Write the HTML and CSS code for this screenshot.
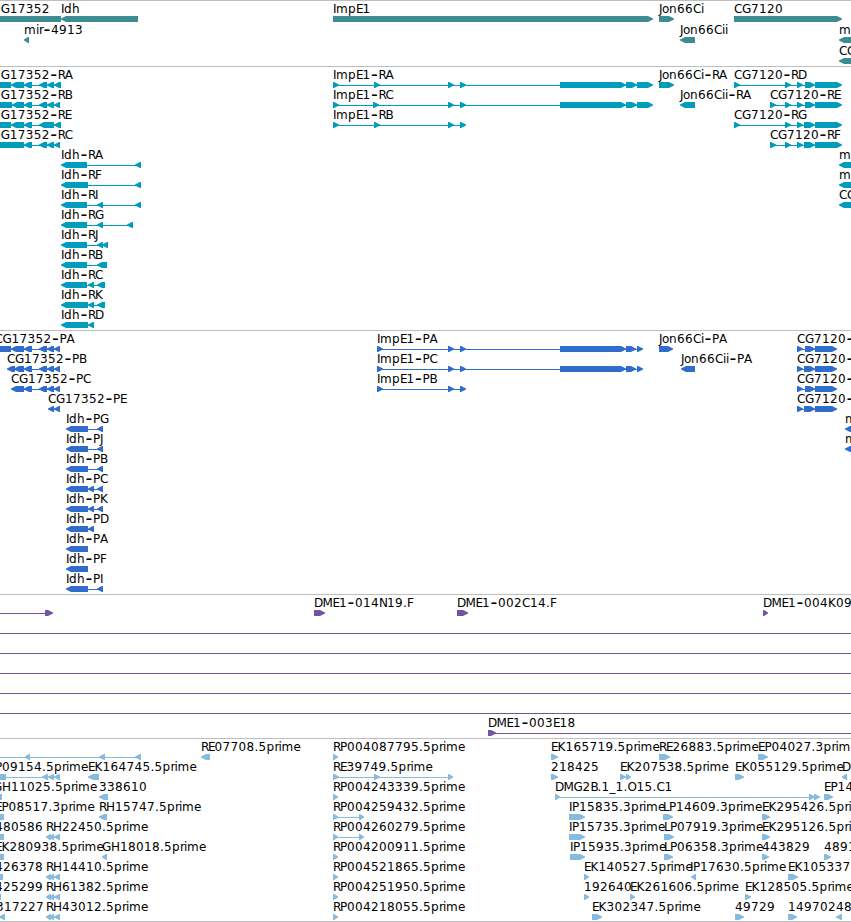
FILE: index.html
```html
<!DOCTYPE html>
<html lang="en">
<head>
<meta charset="utf-8">
<title>Genome browser</title>
<link rel="stylesheet" href="styles.css">
</head>
<body>
<main class="browser" id="browser"></main>
<script src="tracks.js"></script>
</body>
</html>
```
FILE: styles.css
```css
body {
  margin: 0;
  background: #fff;
  overflow: hidden;
}

.browser {
  display: flex;
  flex-direction: column;
  width: 851px;
  height: 922px;
  box-sizing: border-box;
  overflow: hidden;
  border-bottom: 1px solid #bebebe;
}

.track {
  display: flex;
  flex-direction: column;
  flex: none;
  box-sizing: border-box;
  border-top: 1px solid #bebebe;
}

.genes { height: 66px; color: #3c8c92; }
.transcripts { height: 264px; color: #009cbc; }
.proteins { height: 264px; color: #306ccc; }
.clones { height: 144px; color: #7453a4; }
.ests { height: 183px; color: #86bbdd; }

.row {
  display: block;
  flex: none;
  width: 851px;
  height: 20px;
  overflow: visible;
}

.genes .row { height: 21px; }

.label {
  font-family: "DejaVu Sans", sans-serif;
  font-size: 12px;
  fill: #000;
}

.hyphen { font-size: 19px; }

.exon { fill: currentColor; }

.intron {
  fill: currentColor;
  shape-rendering: crispEdges;
}
```
FILE: tracks.js
```js
// Each feature: [label, label x, direction, exons, line start, line end]
const R = '>', L = '<';
const tail = [[39, 47], [47, 54], [54, 60]];
const imp = [[333, 339], [374, 380], [448, 454], [460, 466]];
const impEnd = [[560, 626], [626, 637], [637, 653]];
const impP = [[377, 383], [448, 454], [460, 466]];
const impPEnd = [[560, 626], [626, 636], [637, 643]];
const cg = (a, b) => [[a, a + 6], [785, 791], [797, 803], [b, 815], [815, 842]];
const cgP = b => ['CG7120-P', 797, R, [[797, 803], [b, 815], [815, 837]]];
const rh = [[46, 51], [50, 54], [54, 60]];
const wide = ['', 0, R, [], -2, 853];
const rp = (name, exons) => [name + '.5prime', 333, R, exons || [[333, 338]]];

const tracks = [
  ['genes', [
    [['G17352', 0.7, R, [[-20, 67]], 0, 0, 61], ['Idh', 61, L, [[61, 138]]], ['ImpE1', 333, R, [[333, 653]]],
      ['Jon66Ci', 659, R, [[659, 674]]], ['CG7120', 734, R, [[734, 842]]]],
    [['mir-4913', 24, L, [[24, 29]]], ['Jon66Cii', 680, L, [[680, 695]]], ['mir', 839, L, [[839, 860]]]],
    [['CG', 839, L, [[839, 860]]]]
  ]],
  ['transcripts', [
    [['G17352-RA', 0.7, L, [[-9, 11], [11, 24], [24, 32], [39, 47], [47, 54], [54, 61]]],
      ['ImpE1-RA', 333, R, [...imp, ...impEnd]], ['Jon66Ci-RA', 659, R, [[659, 674]]], ['CG7120-RD', 734, R, cg(734, 805)]],
    [['G17352-RB', 0.7, L, [[-9, 12], [12, 24], [24, 32], ...tail]],
      ['ImpE1-RC', 333, R, [[333, 339], [373, 379], ...imp.slice(2), ...impEnd]],
      ['Jon66Cii-RA', 680, L, [[680, 695]]], ['CG7120-RE', 770, R, cg(770, 805)]],
    [['G17352-RE', 0.7, L, [[-9, 11], [11, 24], [24, 32], [39, 54], [54, 61]]],
      ['ImpE1-RB', 333, R, imp], ['CG7120-RG', 734, R, cg(734, 804)]],
    [['G17352-RC', 0.7, L, [[-9, 24], [24, 32], ...tail]], ['CG7120-RF', 770, R, cg(770, 804)]],
    [['Idh-RA', 61, L, [[61, 87], [135, 141]]], ['mir', 839, L, [[839, 860]]]],
    [['Idh-RF', 61, L, [[61, 88], [135, 141]]], ['mir', 839, L, [[839, 860]]]],
    [['Idh-RI', 61, L, [[61, 87], [97, 103], [135, 141]]], ['CG', 839, L, [[839, 860]]]],
    [['Idh-RG', 61, L, [[61, 87], [97, 103], [127, 133]]]],
    [['Idh-RJ', 61, L, [[61, 87], [97, 103], [102, 108]]]],
    [['Idh-RB', 61, L, [[61, 87], [97, 107]]]],
    [['Idh-RC', 61, L, [[61, 87], [88, 94], [97, 105]]]],
    [['Idh-RK', 61, L, [[61, 88], [88, 94], [97, 105]]]],
    [['Idh-RD', 61, L, [[61, 88], [88, 94]]]]
  ]],
  ['proteins', [
    [['CG17352-PA', -5.5, L, [[-9, 11], [11, 24], [24, 32], ...tail]], ['ImpE1-PA', 377, R, [...impP, ...impPEnd]],
      ['Jon66Ci-PA', 659, R, [[659, 673]]], cgP(805)],
    [['CG17352-PB', 7, L, [[7, 15], [14, 24], [24, 32], ...tail]], ['ImpE1-PC', 377, R, [...impP, ...impPEnd]],
      ['Jon66Cii-PA', 681, L, [[681, 695]]], cgP(804)],
    [['CG17352-PC', 11, L, [[11, 24], [24, 32], ...tail]], ['ImpE1-PB', 377, R, impP], cgP(805)],
    [['CG17352-PE', 48, L, [[48, 54], [54, 60]]], cgP(804)],
    [['Idh-PG', 66, L, [[66, 88], [97, 103]]], ['m', 845, L, [[845, 860]]]],
    [['Idh-PJ', 66, L, [[66, 88], [97, 103]]], ['m', 845, L, [[845, 860]]]],
    [['Idh-PB', 66, L, [[66, 88], [97, 103]]]],
    [['Idh-PC', 66, L, [[66, 88], [88, 94], [97, 103]]]],
    [['Idh-PK', 66, L, [[66, 88], [88, 94], [97, 103]]]],
    [['Idh-PD', 66, L, [[66, 88], [88, 94]]]],
    [['Idh-PA', 66, L, [[66, 88]]]],
    [['Idh-PF', 66, L, [[66, 88]]]],
    [['Idh-PI', 66, L, [[66, 88], [97, 103]]]]
  ]],
  ['clones', [
    [['', 0, R, [[45, 53]], -2, 46], ['DME1-014N19.F', 314, R, [[314, 325]]],
      ['DME1-002C14.F', 457, R, [[457, 468]]], ['DME1-004K09', 763, R, [[763, 768]]]],
    [wide], [wide], [wide], [wide], [wide],
    [['DME1-003E18', 488, R, [[488, 496]], 488, 853]]
  ]],
  ['ests', [
    [['', 0, L, [[25, 30], [99, 105], [135, 141]], -2, 141], ['RE07708.5prime', 201, L, [[201, 210]]], rp('RP004087795'),
      ['EK165719.5prime', 551, R, [[551, 558]]], ['RE26883.5prime', 659, R, [[659, 670]]], ['EP04027.3prime', 758, R, [[758, 768]]]],
    [['P09154.5prime', -5, L, [[-9, 6], [42, 48], [48, 54], [54, 60]]], ['EK164745.5prime', 88, L, [[88, 99]]],
      ['RE39749.5prime', 333, R, [[333, 339], [374, 380], [448, 453]]], ['218425', 551, R, [[551, 558]]],
      ['EK207538.5prime', 620, R, [[620, 626], [626, 631]]], ['EK055129.5prime', 735, R, [[735, 744]]], ['D', 842, L, [[842, 847]]]],
    [['GH11025.5prime', -7, L, [[-9, 2]]], ['338610', 99, L, [[99, 108]]], rp('RP004243339'),
      ['DMG2B.1_1.O15.C1', 555, R, [[555, 560], [809, 815], [814, 820]]], ['EP14', 824, R, [[824, 833]]]],
    [['EP08517.3prime', -5, L, [[-9, 4]]], ['RH15747.5prime', 99, L, [[99, 107]]], rp('RP004259432', [[333, 338], [359, 364]]),
      ['IP15835.3prime', 569, R, [[569, 585]]], ['LP14609.3prime', 663, R, [[663, 673]]], ['EK295426.5prime', 762, R, [[762, 770]]]],
    [['480586', -5, L, [[-9, 4]]], ['RH22450.5prime', 46, L, rh], rp('RP004260279', [[333, 338], [359, 364]]),
      ['IP15735.3prime', 569, R, [[569, 585]]], ['LP07919.3prime', 664, R, [[664, 674]]], ['EK295126.5prime', 762, R, [[762, 770]]]],
    [['EK280938.5prime', -5, L, [[-9, 4]]], ['GH18018.5prime', 102, L, [[102, 107]]], rp('RP004200911'),
      ['IP15935.3prime', 570, R, [[570, 585]]], ['LP06358.3prime', 664, R, [[664, 673]]], ['443829', 762, R, [[762, 769]]],
      ['48911', 824, R, [[824, 831]]]],
    [['426378', -5, L, [[-9, 3]]], ['RH14410.5prime', 46, L, rh], rp('RP004521865'),
      ['EK140527.5prime', 584, R, [[584, 589]]], ['IP17630.5prime', 690, L, [[691, 696]]], ['EK105337', 788, R, [[788, 798]]]],
    [['425299', -5, L, [[-9, 1]]], ['RH61382.5prime', 46, L, rh], rp('RP004251950'),
      ['192640', 584, R, [[584, 589]]], ['EK261606.5prime', 630, R, [[630, 635]]], ['EK128505.5prime', 745, R, [[745, 751]]]],
    [['317227', -4, L, [[-1, 5]]], ['RH43012.5prime', 46, L, rh], rp('RP004218055'),
      ['EK302347.5prime', 592, R, [[592, 602]]], ['49729', 735, R, [[735, 744]]], ['14970248', 788, R, [[788, 797]]],
      ['', 0, L, [[836, 842]]]]
  ]]
];

// Glyph advances in pixels; digits and unlisted characters take 8.
const advance = { R: 7, P: 7, E: 6.5, B: 7, F: 6, L: 6, I: 3, J: 3, G: 9, H: 9, D: 8.5, N: 8, O: 9, M: 10, A: 9,
  '.': 4, '_': 6, r: 4, i: 3, m: 12, e: 7, o: 7 };

function label(text, x) {
  let out = '';
  let run = '', xs = [];
  const flush = () => {
    if (run) out += `<tspan y="12" x="${xs.join(' ')}">${run}</tspan>`;
    run = '';
    xs = [];
  };
  for (const ch of text) {
    if (ch === '-') {
      flush();
      out += `<tspan class="hyphen" x="${x + 0.5}" y="14">-</tspan>`;
    } else {
      run += ch;
      xs.push(x);
    }
    x += advance[ch] || 8;
  }
  flush();
  return `<text class="label">${out}</text>`;
}

function exon([a, b], dir) {
  const head = Math.min(6, b - a);
  const points = dir === R
    ? `${a},15 ${b - head + 1},15 ${b},17.5 ${b},18.5 ${b - head + 1},21 ${a},21`
    : `${b},15 ${a + head - 1},15 ${a},17.5 ${a},18.5 ${a + head - 1},21 ${b},21`;
  return `<polygon class="exon" points="${points}"/>`;
}

function feature([text, x, dir, exons, from, to, clip]) {
  let out = '';
  if (clip) {
    out += `<rect class="exon" x="0" y="15" width="${clip}" height="6"/>`;
  } else {
    const a = from ?? exons[0][0] + 1;
    const b = to ?? exons[exons.length - 1][1] - 1;
    if (to || exons.length > 1) out += `<rect class="intron" x="${a}" y="18" width="${b - a}" height="1"/>`;
    out += exons.map(e => exon(e, dir)).join('');
  }
  return out + (text ? label(text, x) : '');
}

document.getElementById('browser').innerHTML = tracks.map(([name, rows]) =>
  `<section class="track ${name}">` +
  rows.map(row => `<svg class="row">${row.map(feature).join('')}</svg>`).join('') +
  '</section>').join('');
```
